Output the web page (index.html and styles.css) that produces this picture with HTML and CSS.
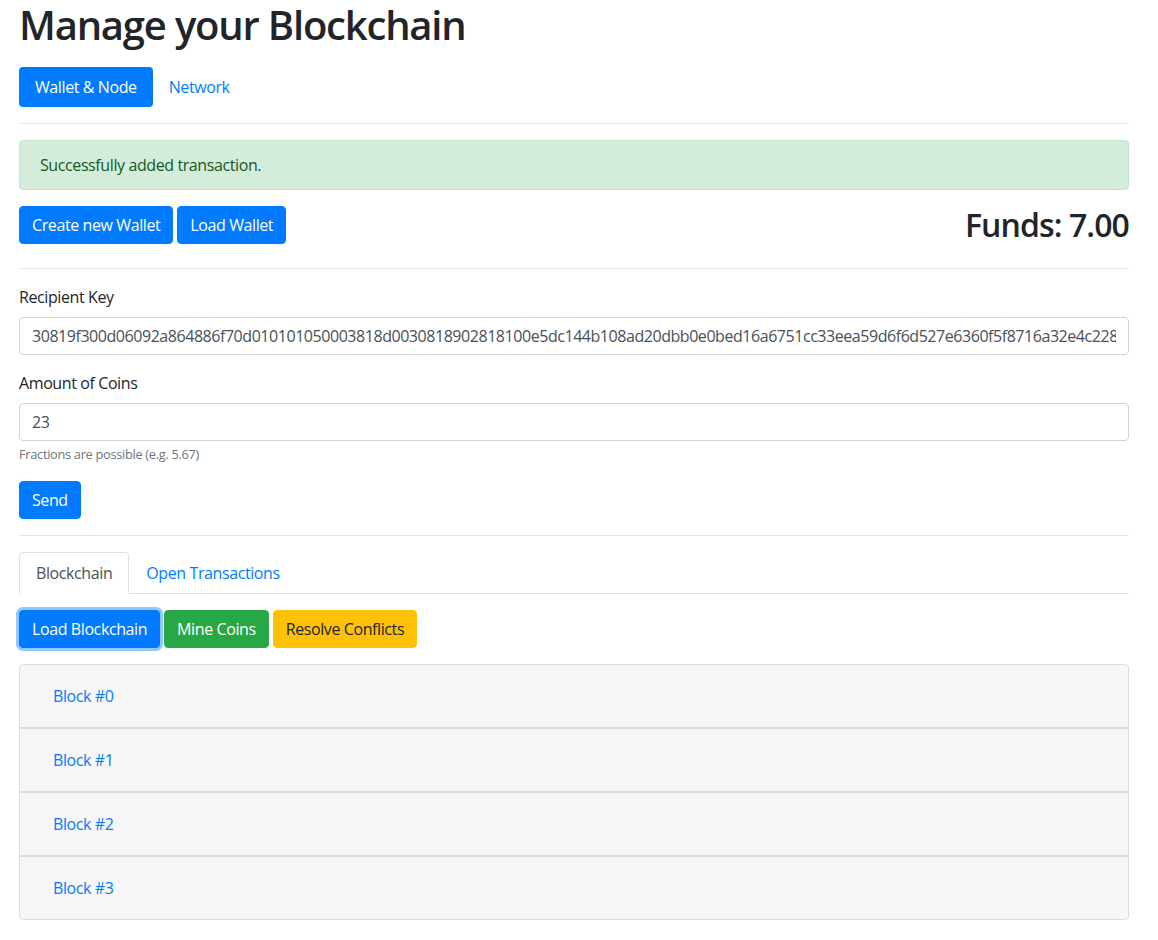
FILE: index.html
```html
<!DOCTYPE html>
<html lang="en">
<head>
<meta charset="utf-8">
<title>Manage your Blockchain</title>
<link rel="stylesheet" href="styles.css">
</head>
<body>
<div class="container">
  <h1 class="title">Manage your Blockchain</h1>
  <ul class="pills">
    <li><a class="pill active" href="#">Wallet &amp; Node</a></li>
    <li><a class="pill" href="#">Network</a></li>
  </ul>
  <hr class="sep">
  <div class="alert">Successfully added transaction.</div>
  <div class="wallet-row">
    <div class="btn-group">
      <button class="btn btn-primary">Create new Wallet</button>
      <button class="btn btn-primary">Load Wallet</button>
    </div>
    <h2 class="funds">Funds: 7.00</h2>
  </div>
  <hr class="sep">
  <form class="tx-form">
    <div class="form-group">
      <label class="label" for="recipient">Recipient Key</label>
      <input class="input" id="recipient" type="text" value="30819f300d06092a864886f70d010101050003818d0030818902818100e5dc144b108ad20dbb0e0bed16a6751cc33eea59d6f6d527e6360f5f8716a32e4c228b2b0d5a1d9c0203010001">
    </div>
    <div class="form-group">
      <label class="label" for="amount">Amount of Coins</label>
      <input class="input" id="amount" type="text" value="23">
      <small class="hint">Fractions are possible (e.g. 5.67)</small>
    </div>
    <button class="btn btn-primary" type="button">Send</button>
  </form>
  <hr class="sep">
  <ul class="tabs">
    <li><a class="tab active" href="#">Blockchain</a></li>
    <li><a class="tab" href="#">Open Transactions</a></li>
  </ul>
  <div class="actions">
    <button class="btn btn-primary focused">Load Blockchain</button>
    <button class="btn btn-success">Mine Coins</button>
    <button class="btn btn-warning">Resolve Conflicts</button>
  </div>
  <div class="accordion">
    <div class="block"><button class="block-link">Block #0</button></div>
    <div class="block"><button class="block-link">Block #1</button></div>
    <div class="block"><button class="block-link">Block #2</button></div>
    <div class="block"><button class="block-link">Block #3</button></div>
  </div>
</div>
</body>
</html>
```

FILE: styles.css
```css
* { box-sizing: border-box; }

html, body {
  margin: 0;
  padding: 0;
  background: #fff;
}

body {
  font-family: "Segoe UI", "Open Sans", "Noto Sans", sans-serif;
  font-size: 16px;
  line-height: 1.5;
  color: #212529;
  letter-spacing: -0.4px;
}

.container {
  width: 1110px;
  margin-left: 19px;
}

.title {
  margin: 0;
  padding-top: 1px;
  font-size: 40px;
  font-weight: 600;
  line-height: 1.2;
  letter-spacing: -1.2px;
}

.pills {
  list-style: none;
  margin: 18px 0 0;
  padding: 0;
  display: flex;
}

.pill {
  display: block;
  padding: 8px 16px;
  border-radius: 4px;
  color: #007bff;
  text-decoration: none;
}

.pill.active {
  background: #007bff;
  color: #fff;
}

.sep {
  margin: 16px 0;
  border: 0;
  border-top: 1px solid rgba(0, 0, 0, 0.1);
  height: 0;
}

.alert {
  padding: 12px 20px;
  margin-bottom: 16px;
  border: 1px solid #c3e6cb;
  border-radius: 4px;
  background: #d4edda;
  color: #155724;
}

.wallet-row {
  display: flex;
  justify-content: space-between;
  align-items: flex-start;
}

.btn-group {
  display: flex;
  gap: 4px;
}

.btn {
  display: inline-block;
  font-family: inherit;
  font-size: 16px;
  line-height: 1.5;
  letter-spacing: -0.4px;
  padding: 6px 12px;
  border: 1px solid transparent;
  border-radius: 4px;
  cursor: pointer;
}

.btn-primary {
  background: #007bff;
  border-color: #007bff;
  color: #fff;
}

.btn-success {
  background: #28a745;
  border-color: #28a745;
  color: #fff;
}

.btn-warning {
  background: #ffc107;
  border-color: #ffc107;
  color: #212529;
}

.focused {
  box-shadow: 0 0 0 3px rgba(38, 143, 255, 0.5);
}

.funds {
  margin: 0 0 8px;
  font-size: 32px;
  font-weight: 600;
  line-height: 1.2;
  letter-spacing: -0.9px;
}

.form-group {
  margin-bottom: 16px;
}

.label {
  display: inline-block;
  margin-bottom: 8px;
}

.input {
  display: block;
  width: 100%;
  height: 38px;
  padding: 6px 12px;
  font-family: inherit;
  font-size: 16px;
  line-height: 1.5;
  letter-spacing: -0.45px;
  color: #495057;
  background: #fff;
  border: 1px solid #ced4da;
  border-radius: 4px;
}

.hint {
  display: block;
  margin-top: 4px;
  font-size: 12.8px;
  letter-spacing: -0.3px;
  color: #6c757d;
}

.tabs {
  list-style: none;
  margin: 0;
  padding: 0;
  display: flex;
  border-bottom: 1px solid #dee2e6;
}

.tab {
  display: block;
  margin-bottom: -1px;
  padding: 8px 16px;
  border: 1px solid transparent;
  border-top-left-radius: 4px;
  border-top-right-radius: 4px;
  color: #007bff;
  text-decoration: none;
}

.tab.active {
  color: #495057;
  background: #fff;
  border-color: #dee2e6 #dee2e6 #fff;
}

.actions {
  display: flex;
  gap: 4px;
  margin-top: 16px;
}

.accordion {
  margin-top: 16px;
  border-radius: 4px;
  overflow: hidden;
}

.block {
  padding: 12px 20px;
  background: #f7f7f7;
  border: 1px solid #dcdcdc;
}

.block:first-child {
  border-top-left-radius: 4px;
  border-top-right-radius: 4px;
}

.block:last-child {
  border-bottom-left-radius: 4px;
  border-bottom-right-radius: 4px;
}

.block-link {
  display: inline-block;
  padding: 6px 12px;
  font-family: inherit;
  font-size: 16px;
  line-height: 1.5;
  letter-spacing: -0.4px;
  color: #007bff;
  background: transparent;
  border: 1px solid transparent;
  cursor: pointer;
}
```
